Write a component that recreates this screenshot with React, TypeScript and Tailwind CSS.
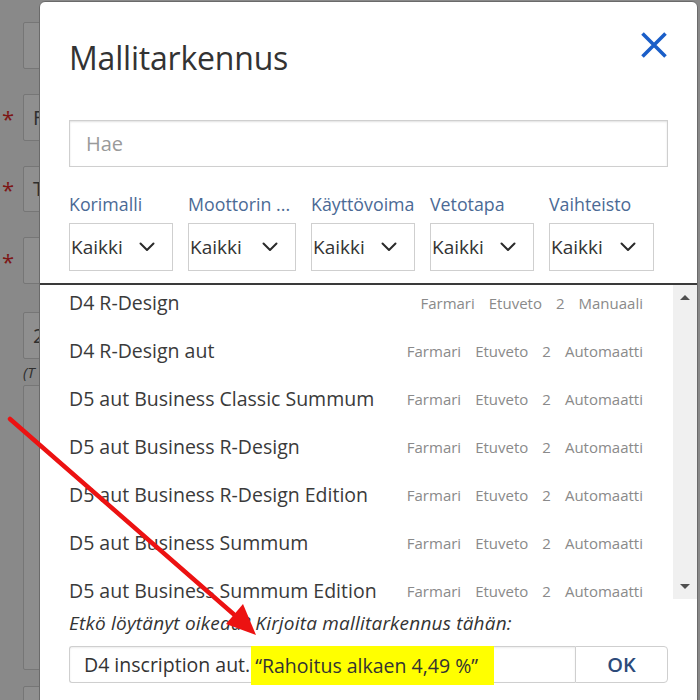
import React from "react";

const rows = [
  { name: "D4 R-Design", meta: ["Farmari", "Etuveto", "2", "Manuaali"] },
  { name: "D4 R-Design aut", meta: ["Farmari", "Etuveto", "2", "Automaatti"] },
  { name: "D5 aut Business Classic Summum", meta: ["Farmari", "Etuveto", "2", "Automaatti"] },
  { name: "D5 aut Business R-Design", meta: ["Farmari", "Etuveto", "2", "Automaatti"] },
  { name: "D5 aut Business R-Design Edition", meta: ["Farmari", "Etuveto", "2", "Automaatti"] },
  { name: "D5 aut Business Summum", meta: ["Farmari", "Etuveto", "2", "Automaatti"] },
  { name: "D5 aut Business Summum Edition", meta: ["Farmari", "Etuveto", "2", "Automaatti"] },
];

const filters = [
  { label: "Korimalli", col: "w-[119px]", sel: "w-[104px]" },
  { label: "Moottorin ...", col: "w-[123px]", sel: "w-[108px]" },
  { label: "Käyttövoima", col: "w-[119px]", sel: "w-[104px]" },
  { label: "Vetotapa", col: "w-[119px]", sel: "w-[104px]" },
  { label: "Vaihteisto", col: "w-[105px]", sel: "w-[105px]" },
];

function Chevron() {
  return (
    <svg width="16" height="10" viewBox="0 0 16 10" fill="none">
      <path d="M1.5 1.5 L8 8 L14.5 1.5" stroke="#2a2a2a" strokeWidth="2" strokeLinecap="round" strokeLinejoin="round" />
    </svg>
  );
}

function BgField({ star, text, h = "h-[47px]" }: { star?: boolean; text?: string; h?: string }) {
  return (
    <div className="flex items-center">
      <div className="w-[23px] text-[22px] leading-none text-[#7d1616] pl-[2px]">{star ? "*" : ""}</div>
      <div className={`w-[80px] ${h} border border-[#767676] bg-[#8f8f8f] rounded-[2px] pl-[9px] flex items-center text-[20px] text-[#2e2e2e]`}>
        {text}
      </div>
    </div>
  );
}

export default function App() {
  return (
    <div className="relative w-[700px] h-[700px] overflow-hidden bg-[#898989] font-['Open_Sans',sans-serif]">
      {/* background page */}
      <div className="flex flex-col pt-[22px]">
        <BgField />
        <div className="h-[25px]" />
        <BgField star text="F" />
        <div className="h-[25px]" />
        <BgField star text="T" h="h-[46px]" />
        <div className="h-[25px]" />
        <BgField star />
        <div className="h-[28px]" />
        <BgField text="2" />
        <div className="pl-[23px] text-[15px] italic text-[#2e2e2e] leading-[20px] mt-[3px]">(T</div>
        <div className="flex mt-[3px]">
          <div className="w-[23px]" />
          <div className="w-[80px] h-[285px] border border-[#767676] bg-[#8d8d8d] rounded-[2px]" />
        </div>
        <div className="flex mt-[16px]">
          <div className="w-[23px]" />
          <div className="w-[80px] h-[40px] border border-[#767676] bg-[#8f8f8f] rounded-[2px]" />
        </div>
      </div>

      {/* modal */}
      <div className="absolute left-[39px] top-[1px] w-[659px] h-[720px] bg-white border border-[#6a6a6a] rounded-t-[6px] flex flex-col">
        <div className="pl-[29px] pr-[29px]">
          <div className="flex justify-between items-start pt-[29px]">
            <h1 className="mt-[6px] text-[32px] leading-[42px] text-[#333] tracking-[-0.2px]">Mallitarkennus</h1>
            <svg width="28" height="28" viewBox="0 0 28 28" fill="none">
              <path d="M2.5 2.5 L25.5 25.5 M25.5 2.5 L2.5 25.5" stroke="#1a5ec8" strokeWidth="3.6" />
            </svg>
          </div>
          <div className="mt-[41px] h-[47px] border border-[#cfcfcf] shadow-[inset_0_1px_2px_rgba(0,0,0,0.12)] flex items-center pl-[16px] text-[20px] text-[#9a9a9a]">
            Hae
          </div>
          <div className="flex mt-[25px]">
            {filters.map((f) => (
              <div key={f.label} className={`${f.col} flex flex-col`}>
                <div className="text-[17.8px] leading-[24px] text-[#4b6a95] whitespace-nowrap">{f.label}</div>
                <div className={`${f.sel} mt-[7px] h-[48px] border border-[#cfcfcf] flex items-center justify-between pl-[1px] pr-[17px] text-[19px] text-[#333]`}>
                  <span>Kaikki</span>
                  <Chevron />
                </div>
              </div>
            ))}
          </div>
        </div>

        {/* list */}
        <div className="mt-[12px] border-t-2 border-[#3a3a3a] h-[320px] flex overflow-hidden">
          <div className="flex-1 overflow-hidden">
            <div className="mt-[-6px]">
              {rows.map((r) => (
                <div key={r.name} className="h-[48px] flex items-center justify-between pl-[29px] pr-[30px]">
                  <span className="text-[19.5px] leading-[24px] text-[#3a3a3a] whitespace-nowrap">{r.name}</span>
                  <span className="flex gap-[14px] text-[15px] leading-[20px] text-[#8a8a8a]">
                    {r.meta.map((m, i) => (
                      <span key={i}>{m}</span>
                    ))}
                  </span>
                </div>
              ))}
            </div>
          </div>
          <div className="w-[24px] h-[314px] bg-[#f0f0f0] flex flex-col items-center justify-between py-[10px]">
            <div className="w-0 h-0 border-l-[5px] border-r-[5px] border-b-[5px] border-l-transparent border-r-transparent border-b-[#505050]" />
            <div className="w-0 h-0 border-l-[5px] border-r-[5px] border-t-[5px] border-l-transparent border-r-transparent border-t-[#505050]" />
          </div>
        </div>

        {/* bottom */}
        <div className="pl-[29px] pr-[29px]">
          <div className="mt-[8px] text-[19px] leading-[24px] italic text-[#333] tracking-[0.2px] whitespace-nowrap">
            Etkö löytänyt oikeaa? Kirjoita mallitarkennus tähän:
          </div>
          <div className="mt-[11px] flex">
            <div className="w-[506px] h-[37px] border border-[#cfcfcf] border-r-0 rounded-l-[3px] flex text-[19.5px] text-[#333] shadow-[inset_0_1px_2px_rgba(0,0,0,0.08)]">
              <span className="self-center pl-[14px] whitespace-nowrap">D4 inscription aut.</span>
              <span className="ml-[1px] mt-[-1px] h-[39px] bg-[#ffff00] flex items-center pl-[4px] pr-[16px] whitespace-nowrap">
                “Rahoitus alkaen 4,49 %”
              </span>
            </div>
            <div className="w-[93px] h-[37px] border border-[#cfcfcf] rounded-r-[4px] flex items-center justify-center text-[20px] font-semibold text-[#2c4b7a]">
              OK
            </div>
          </div>
        </div>
      </div>

      {/* annotation arrow */}
      <svg className="absolute inset-0 pointer-events-none" width="700" height="700" viewBox="0 0 700 700">
        <line x1="10" y1="419" x2="238" y2="618" stroke="#ec1212" strokeWidth="4.5" strokeLinecap="round" />
        <polygon points="256,635 226,624 243,604" fill="#ec1212" />
      </svg>
    </div>
  );
}
